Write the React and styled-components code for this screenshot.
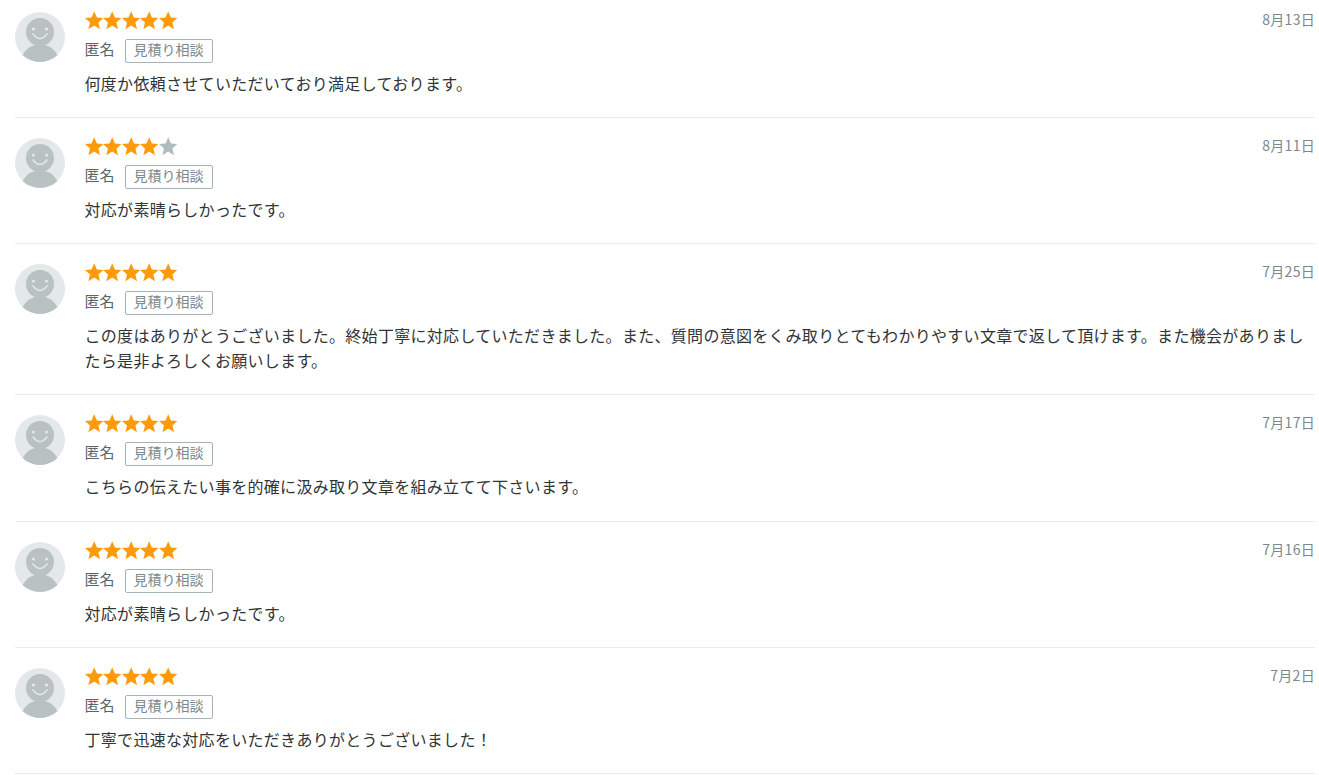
import React from "react";
import styled, { createGlobalStyle } from "styled-components";

const Global = createGlobalStyle`
  html, body { margin: 0; padding: 0; background: #fff; overflow: hidden; }
  body { font-family: "Noto Sans CJK JP", "Noto Sans", sans-serif; color: #333; }
`;

const List = styled.ul`
  list-style: none;
  margin: 0;
  padding: 11.6px 4px 0 15px;
  height: 775px;
  box-sizing: border-box;
  overflow: hidden;
`;

const Row = styled.li`
  display: flex;
  gap: 20px;
  padding: 20px 0 21.5px;
  border-bottom: 1px solid #e9ebec;
  &:first-child { padding-top: 0; }
`;

const Body = styled.div`
  flex: 1;
  min-width: 0;
`;

const Head = styled.div`
  display: flex;
  justify-content: space-between;
  align-items: flex-start;
`;

const Stars = styled.div`
  display: flex;
  height: 19px;
  margin: -1px 0 9px 0;
`;

const DateText = styled.time`
  font-size: 14px;
  line-height: 16px;
  letter-spacing: 0.3px;
  margin-top: -1px;
  color: #7a898e;
`;

const Meta = styled.div`
  display: flex;
  align-items: center;
  height: 24px;
  gap: 10px;
  margin-bottom: 8px;
`;

const Name = styled.span`
  font-size: 15px;
  line-height: 20px;
  margin: -4px 0 0 -0.5px;
  color: #56666b;
`;

const Tag = styled.span`
  display: flex;
  align-items: center;
  box-sizing: border-box;
  height: 24px;
  width: 88px;
  padding-bottom: 4px;
  justify-content: center;
  font-size: 14px;
  color: #7a898e;
  border: 1px solid #a3b3b8;
  border-radius: 2px;
`;

const Comment = styled.p`
  margin: 0 0 0 -0.5px;
  font-size: 16px;
  line-height: 24.8px;
  letter-spacing: 0.3px;
  color: #2f3436;
`;

const Star = ({ on }) => (
  <svg width="18.4" height="19" viewBox="0 0 18.4 19">
    <polygon
      fill={on ? "#ff9a0a" : "#aebcbf"}
      points="9.2,0.2 11.9,6.5 18.4,7 13.4,11.4 15,18.2 9.2,14.6 3.4,18.2 5,11.4 0,7 6.5,6.5"
    />
  </svg>
);

const Avatar = () => (
  <svg width="50" height="50" viewBox="0 0 50 50" style={{ flex: "none" }}>
    <defs>
      <clipPath id="avatar-clip">
        <circle cx="25" cy="25" r="25" />
      </clipPath>
    </defs>
    <circle cx="25" cy="25" r="25" fill="#e4e8e9" />
    <g clipPath="url(#avatar-clip)">
      <ellipse cx="25" cy="50" rx="19" ry="17.5" fill="#b9c1c3" />
      <circle cx="25" cy="20" r="14" fill="#b9c1c3" />
      <circle cx="18.5" cy="17" r="1.6" fill="#e4e8e9" />
      <circle cx="31.5" cy="17" r="1.6" fill="#e4e8e9" />
      <path d="M18 22 Q25 31 32 22" fill="none" stroke="#e4e8e9" strokeWidth="1.6" strokeLinecap="round" />
    </g>
  </svg>
);

const reviews = [
  { rate: 5, date: "8月13日", text: "何度か依頼させていただいており満足しております。" },
  { rate: 4, date: "8月11日", text: "対応が素晴らしかったです。" },
  { rate: 5, date: "7月25日", text: "この度はありがとうございました。終始丁寧に対応していただきました。また、質問の意図をくみ取りとてもわかりやすい文章で返して頂けます。また機会がありましたら是非よろしくお願いします。" },
  { rate: 5, date: "7月17日", text: "こちらの伝えたい事を的確に汲み取り文章を組み立てて下さいます。" },
  { rate: 5, date: "7月16日", text: "対応が素晴らしかったです。" },
  { rate: 5, date: "7月2日", text: "丁寧で迅速な対応をいただきありがとうございました！" },
];

export default function App() {
  return (
    <>
      <Global />
      <List>
        {reviews.map((r, i) => (
          <Row key={i}>
            <Avatar />
            <Body>
              <Head>
                <Stars>
                  {[1, 2, 3, 4, 5].map((n) => (
                    <Star key={n} on={n <= r.rate} />
                  ))}
                </Stars>
                <DateText>{r.date}</DateText>
              </Head>
              <Meta>
                <Name>匿名</Name>
                <Tag>見積り相談</Tag>
              </Meta>
              <Comment>{r.text}</Comment>
            </Body>
          </Row>
        ))}
      </List>
    </>
  );
}
